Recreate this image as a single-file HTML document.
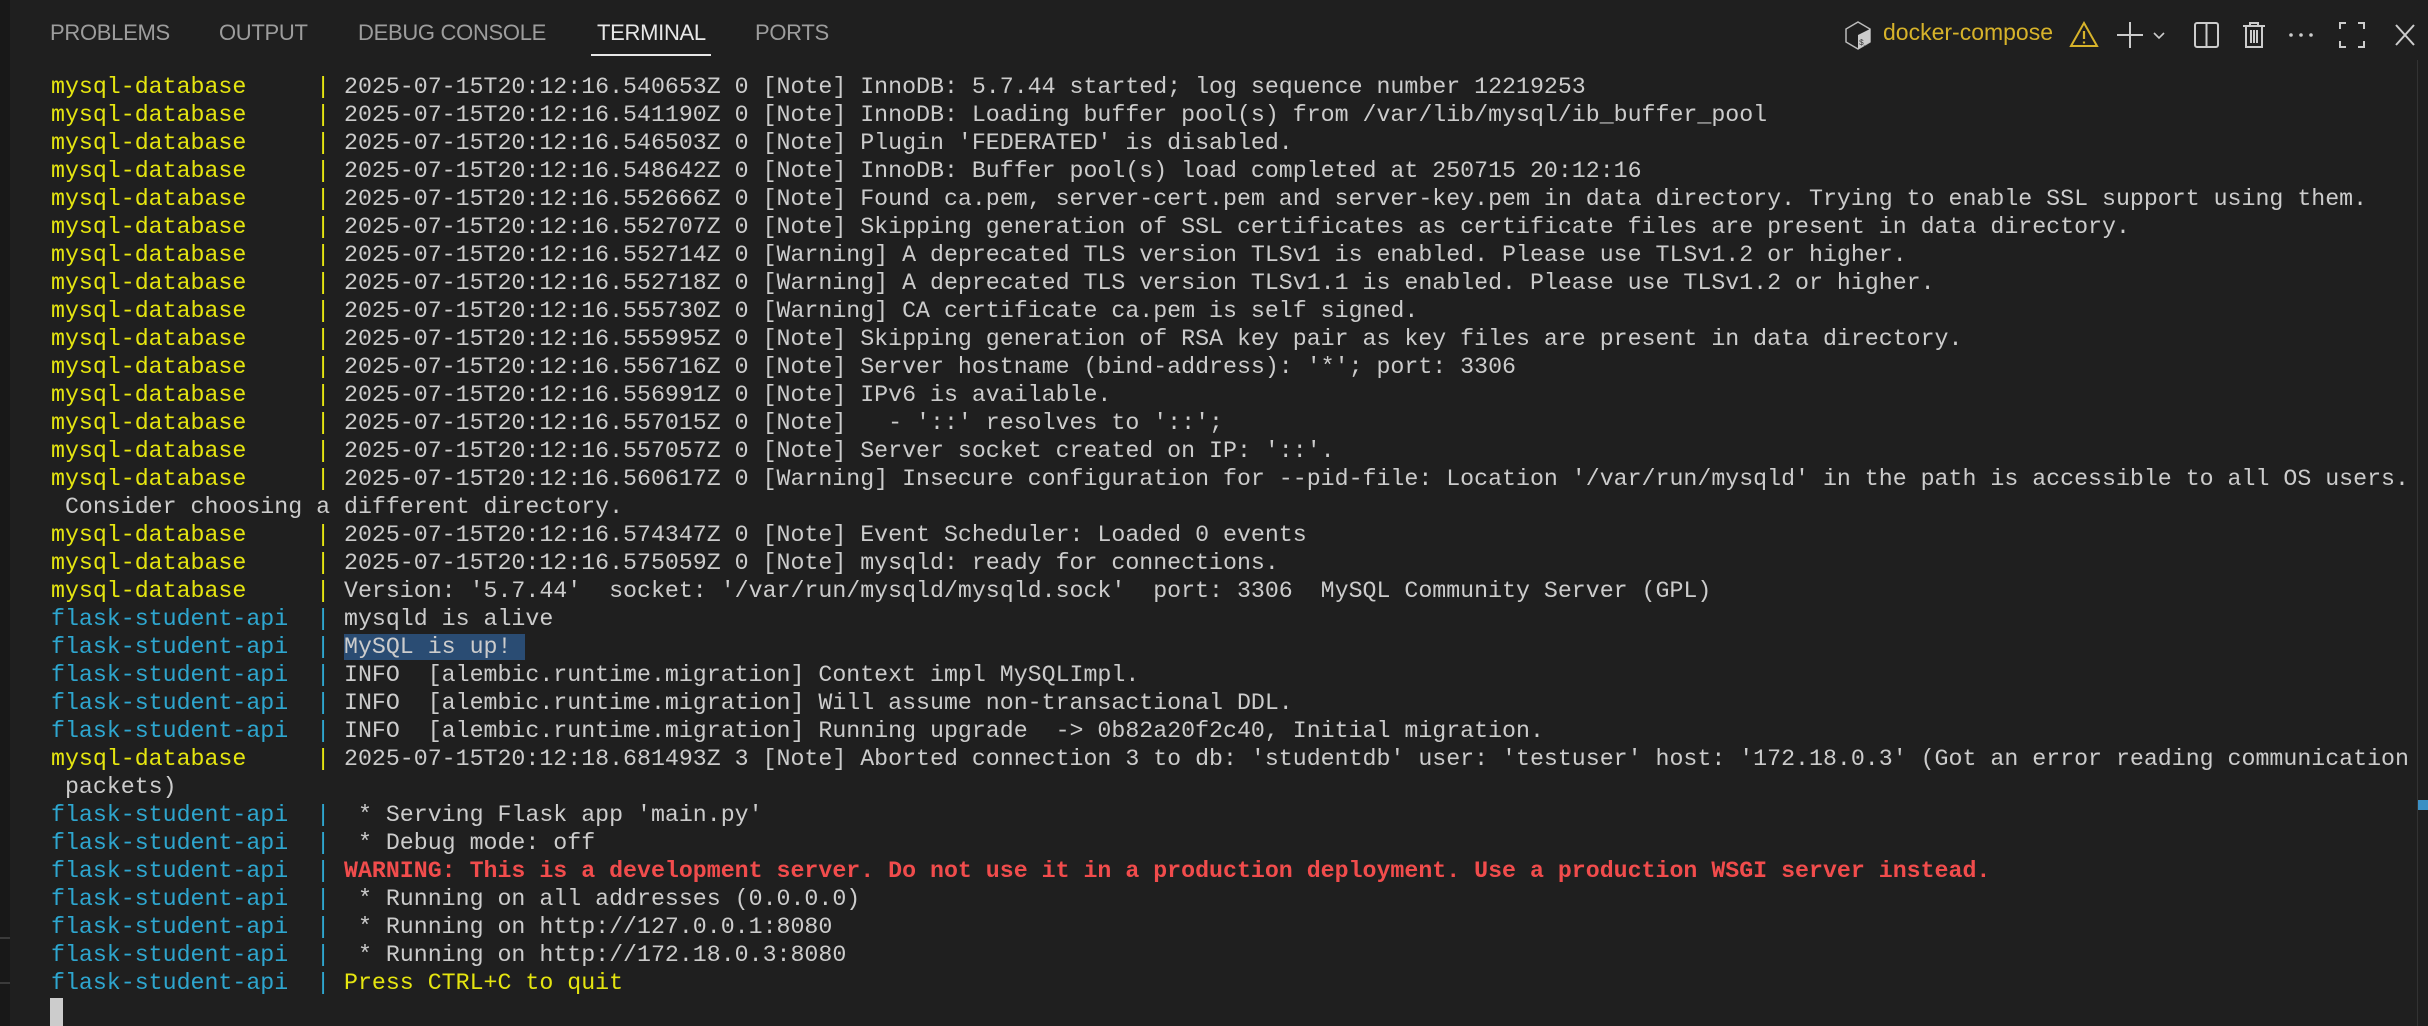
<!DOCTYPE html>
<html><head><meta charset="utf-8"><style>
html,body{margin:0;padding:0;width:2428px;height:1026px;background:#1f1f1f;overflow:hidden}
.strip{position:absolute;left:0;top:0;width:10px;height:1026px;background:#181818}
.hl{position:absolute;left:0;width:10px;height:2px;background:#3a3a3a}
.tab{position:absolute;top:20px;font:22px "Liberation Sans",sans-serif;color:#9d9d9d;letter-spacing:-0.3px}
.ul{position:absolute;left:591px;top:54px;width:120px;height:2px;background:#e7e7e7}
pre{position:absolute;left:51px;top:73px;margin:0;font:23.25px/28px "Liberation Mono",monospace;color:#cccccc}
.y{color:#e5e510}.c{color:#2ea6cf}.r{color:#f14c4c;font-weight:bold}
.sel{background:#2a4c73}
.cur{position:absolute;left:50px;top:998px;width:13px;height:28px;background:#cccccc}
.ic{position:absolute;top:20px}
.vl{position:absolute;left:2417px;top:60px;width:1px;height:966px;background:#333}
.sb{position:absolute;left:2418px;top:800px;width:10px;height:10px;background:#3b8fc4}
</style></head><body>
<div class="strip"></div><div class="hl" style="top:937px"></div><div class="hl" style="top:982px"></div>
<div class="tab" style="left:50px">PROBLEMS</div>
<div class="tab" style="left:219px">OUTPUT</div>
<div class="tab" style="left:358px">DEBUG CONSOLE</div>
<div class="tab" style="left:597px;color:#e7e7e7">TERMINAL</div>
<div class="tab" style="left:755px">PORTS</div>
<div class="ul"></div>
<svg class="ic" style="left:1843px" width="30" height="30" viewBox="0 0 30 30"><path d="M15 2 L27 9 V22 L15 29 L3 22 V9 Z" fill="none" stroke="#bbb" stroke-width="1.5"/><path d="M15 15 L27 9 V22 L15 29 Z" fill="#ccc"/><text x="16" y="25" font-size="8" fill="#333" font-family="Liberation Mono">$_</text></svg>
<div style="position:absolute;left:1883px;top:19px;font:23px 'Liberation Sans',sans-serif;color:#d7b32a">docker-compose</div>
<svg class="ic" style="left:2069px" width="30" height="30" viewBox="0 0 30 30"><path d="M15 3 L28 26 H2 Z" fill="none" stroke="#d7b32a" stroke-width="2"/><path d="M15 11 V19 M15 21.5 V23.5" stroke="#d7b32a" stroke-width="2.2"/></svg>
<svg class="ic" style="left:2116px" width="60" height="30" viewBox="0 0 60 30"><path d="M14 2 V28 M1 15 H27" stroke="#ccc" stroke-width="2"/><path d="M38 13 L43 18 L48 13" fill="none" stroke="#ccc" stroke-width="1.6"/></svg>
<svg class="ic" style="left:2193px" width="28" height="30" viewBox="0 0 28 30"><rect x="2" y="3" width="23" height="24" rx="2" fill="none" stroke="#ccc" stroke-width="2"/><path d="M13.5 3 V27" stroke="#ccc" stroke-width="2"/></svg>
<svg class="ic" style="left:2241px" width="26" height="30" viewBox="0 0 26 30"><path d="M2 6 H24 M9 6 V3 H17 V6 M5 6 V27 H21 V6 M10 10 V23 M13 10 V23 M16 10 V23" fill="none" stroke="#ccc" stroke-width="2"/></svg>
<svg class="ic" style="left:2287px" width="30" height="30" viewBox="0 0 30 30"><circle cx="4" cy="15" r="1.8" fill="#ccc"/><circle cx="14" cy="15" r="1.8" fill="#ccc"/><circle cx="24" cy="15" r="1.8" fill="#ccc"/></svg>
<svg class="ic" style="left:2338px" width="28" height="30" viewBox="0 0 28 30"><path d="M2 9 V3 H8 M20 3 H26 V9 M26 21 V27 H20 M8 27 H2 V21" fill="none" stroke="#ccc" stroke-width="2"/></svg>
<svg class="ic" style="left:2393px" width="24" height="30" viewBox="0 0 24 30"><path d="M3 5 L21 25 M21 5 L3 25" stroke="#ccc" stroke-width="2"/></svg>
<div class="vl"></div><div class="sb"></div>
<pre><span class="y">mysql-database     |</span> 2025-07-15T20:12:16.540653Z 0 [Note] InnoDB: 5.7.44 started; log sequence number 12219253
<span class="y">mysql-database     |</span> 2025-07-15T20:12:16.541190Z 0 [Note] InnoDB: Loading buffer pool(s) from /var/lib/mysql/ib_buffer_pool
<span class="y">mysql-database     |</span> 2025-07-15T20:12:16.546503Z 0 [Note] Plugin 'FEDERATED' is disabled.
<span class="y">mysql-database     |</span> 2025-07-15T20:12:16.548642Z 0 [Note] InnoDB: Buffer pool(s) load completed at 250715 20:12:16
<span class="y">mysql-database     |</span> 2025-07-15T20:12:16.552666Z 0 [Note] Found ca.pem, server-cert.pem and server-key.pem in data directory. Trying to enable SSL support using them.
<span class="y">mysql-database     |</span> 2025-07-15T20:12:16.552707Z 0 [Note] Skipping generation of SSL certificates as certificate files are present in data directory.
<span class="y">mysql-database     |</span> 2025-07-15T20:12:16.552714Z 0 [Warning] A deprecated TLS version TLSv1 is enabled. Please use TLSv1.2 or higher.
<span class="y">mysql-database     |</span> 2025-07-15T20:12:16.552718Z 0 [Warning] A deprecated TLS version TLSv1.1 is enabled. Please use TLSv1.2 or higher.
<span class="y">mysql-database     |</span> 2025-07-15T20:12:16.555730Z 0 [Warning] CA certificate ca.pem is self signed.
<span class="y">mysql-database     |</span> 2025-07-15T20:12:16.555995Z 0 [Note] Skipping generation of RSA key pair as key files are present in data directory.
<span class="y">mysql-database     |</span> 2025-07-15T20:12:16.556716Z 0 [Note] Server hostname (bind-address): '*'; port: 3306
<span class="y">mysql-database     |</span> 2025-07-15T20:12:16.556991Z 0 [Note] IPv6 is available.
<span class="y">mysql-database     |</span> 2025-07-15T20:12:16.557015Z 0 [Note]   - '::' resolves to '::';
<span class="y">mysql-database     |</span> 2025-07-15T20:12:16.557057Z 0 [Note] Server socket created on IP: '::'.
<span class="y">mysql-database     |</span> 2025-07-15T20:12:16.560617Z 0 [Warning] Insecure configuration for --pid-file: Location '/var/run/mysqld' in the path is accessible to all OS users.
 Consider choosing a different directory.
<span class="y">mysql-database     |</span> 2025-07-15T20:12:16.574347Z 0 [Note] Event Scheduler: Loaded 0 events
<span class="y">mysql-database     |</span> 2025-07-15T20:12:16.575059Z 0 [Note] mysqld: ready for connections.
<span class="y">mysql-database     |</span> Version: '5.7.44'  socket: '/var/run/mysqld/mysqld.sock'  port: 3306  MySQL Community Server (GPL)
<span class="c">flask-student-api  |</span> mysqld is alive
<span class="c">flask-student-api  |</span> <span class="sel">MySQL is up! </span>
<span class="c">flask-student-api  |</span> INFO  [alembic.runtime.migration] Context impl MySQLImpl.
<span class="c">flask-student-api  |</span> INFO  [alembic.runtime.migration] Will assume non-transactional DDL.
<span class="c">flask-student-api  |</span> INFO  [alembic.runtime.migration] Running upgrade  -&gt; 0b82a20f2c40, Initial migration.
<span class="y">mysql-database     |</span> 2025-07-15T20:12:18.681493Z 3 [Note] Aborted connection 3 to db: 'studentdb' user: 'testuser' host: '172.18.0.3' (Got an error reading communication
 packets)
<span class="c">flask-student-api  |</span>  * Serving Flask app 'main.py'
<span class="c">flask-student-api  |</span>  * Debug mode: off
<span class="c">flask-student-api  |</span> <span class="r">WARNING: This is a development server. Do not use it in a production deployment. Use a production WSGI server instead.</span>
<span class="c">flask-student-api  |</span>  * Running on all addresses (0.0.0.0)
<span class="c">flask-student-api  |</span>  * Running on http://127.0.0.1:8080
<span class="c">flask-student-api  |</span>  * Running on http://172.18.0.3:8080
<span class="c">flask-student-api  |</span> <span class="y">Press CTRL+C to quit</span></pre>
<div class="cur"></div>
</body></html>
